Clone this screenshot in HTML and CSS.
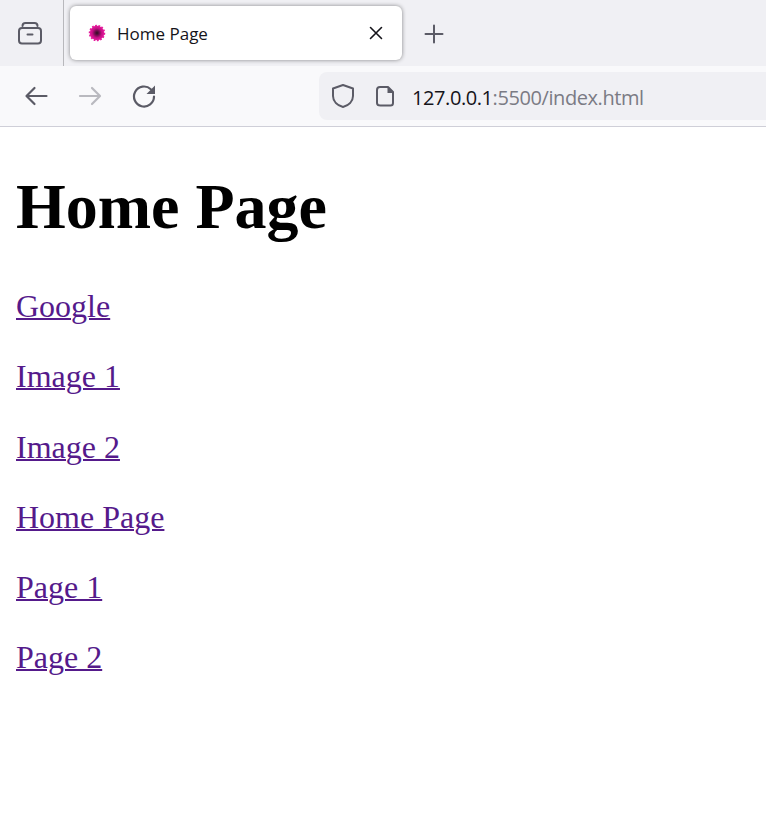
FILE: index.html
```html
<!DOCTYPE html>
<html lang="en">
<head>
<meta charset="utf-8">
<title>Home Page</title>
<link rel="stylesheet" href="styles.css">
</head>
<body>
<header class="browser">
  <div class="tabbar">
    <div class="tabs-side">
      <svg class="icon" width="28" height="28" viewBox="0 0 28 28" fill="none" stroke="#5b5b66" stroke-width="2" stroke-linecap="round" stroke-linejoin="round"><path d="M6.500 7c0-2 1-3 3-3h9c2 0 3 1 3 3"/><rect x="3" y="9" width="22" height="15.500" rx="3"/><path d="M11.500 15.500h5"/></svg>
    </div>
    <div class="tab">
      <svg class="favicon" width="20" height="20" viewBox="0 0 20 20"><defs><radialGradient id="bloom"><stop offset="0" stop-color="#2e0f1e"/><stop offset=".3" stop-color="#6d0d4c"/><stop offset=".65" stop-color="#c40f84"/><stop offset="1" stop-color="#e51a9c"/></radialGradient></defs><circle cx="10" cy="10" r="7" fill="#e51a9c" fill-opacity=".85" stroke="#e51a9c" stroke-width="2.500" stroke-dasharray="1.700 1.400"/><circle cx="10" cy="10" r="7.200" fill="url(#bloom)"/></svg>
      <span class="tab-title">Home Page</span>
      <svg class="tab-close" width="14" height="14" viewBox="0 0 14 14" fill="none" stroke="#15141a" stroke-width="1.600" stroke-linecap="round"><path d="M1.500 1.500l11 11M12.500 1.500l-11 11"/></svg>
    </div>
    <svg class="newtab" width="20" height="20" viewBox="0 0 20 20" fill="none" stroke="#5b5b66" stroke-width="2" stroke-linecap="round"><path d="M10 1.500v17M1.500 10h17"/></svg>
  </div>
  <div class="toolbar">
    <div class="nav">
      <svg width="26" height="26" viewBox="0 0 26 26" fill="none" stroke="#5b5b66" stroke-width="2.200" stroke-linecap="round" stroke-linejoin="round"><path d="M4 13h19.500M11.500 5L3.500 13l8 8"/></svg>
      <svg width="26" height="26" viewBox="0 0 26 26" fill="none" stroke="#b9b9bf" stroke-width="2.200" stroke-linecap="round" stroke-linejoin="round"><path d="M22.500 13H3M15 5l8 8-8 8"/></svg>
      <svg width="26" height="26" viewBox="0 0 26 26" fill="none" stroke="#5b5b66" stroke-width="2.200" stroke-linecap="round" stroke-linejoin="round"><path d="M23 13.500a10 10 0 1 1-3.200-7.300"/><path d="M24 2.500V11h-8.500z" fill="#5b5b66" stroke="none"/></svg>
    </div>
    <div class="urlbar">
      <svg width="24" height="26" viewBox="0 0 24 26" fill="none" stroke="#5b5b66" stroke-width="2" stroke-linejoin="round"><path d="M12 2L22 5.500V13c0 5.500-4.500 9.500-10 11C6.500 22.500 2 18.500 2 13V5.500z"/></svg>
      <svg class="doc" width="20" height="24" viewBox="0 0 20 24" fill="none" stroke="#5b5b66" stroke-width="2" stroke-linejoin="round"><path d="M5 3h8l5 5v11c0 1.500-1 2.500-2.500 2.500h-10C3 21.500 2 20.500 2 19V6c0-1.500 1-3 3-3z"/><path d="M12.500 3v6h6z" fill="#5b5b66" stroke="none"/></svg>
      <span class="url"><span class="host">127.0.0.1</span>:5500/index.html</span>
    </div>
  </div>
</header>
<main class="content">
  <h1 class="title">Home Page</h1>
  <p class="item"><a class="link" href="#">Google</a></p>
  <p class="item"><a class="link" href="#">Image 1</a></p>
  <p class="item"><a class="link" href="#">Image 2</a></p>
  <p class="item"><a class="link" href="#">Home Page</a></p>
  <p class="item"><a class="link" href="#">Page 1</a></p>
  <p class="item"><a class="link" href="#">Page 2</a></p>
</main>
</body>
</html>
```
FILE: styles.css
```css
html, body { margin: 0; padding: 0; background: #fff; overflow: hidden; }
body { width: 766px; height: 827px; }
.browser { font-family: "Open Sans", "Noto Sans", sans-serif; }
.tabbar {
  height: 66px; background: #f0f0f4; display: flex; align-items: center;
}
.tabs-side {
  width: 60px; height: 66px; padding-right: 3px; border-right: 1px solid #b8b8bc;
  display: flex; align-items: center; justify-content: center; flex: none;
}
.tab {
  margin-left: 6px; width: 332px; height: 54px; background: #fff; border-radius: 6px;
  box-shadow: 0 0 4px rgba(0,0,0,.45);
  display: flex; align-items: center; padding: 0 19px 0 17px; box-sizing: border-box; flex: none;
}
.favicon { flex: none; }
.tab-title { margin-left: 10px; font-size: 17px; color: #15141a; flex: 1; white-space: nowrap; }
.newtab { margin: 2px 0 0 22px; flex: none; }
.toolbar {
  height: 60px; background: #f9f9fb; border-bottom: 1px solid #cfcfd8;
  display: flex; align-items: center;
}
.nav { display: flex; align-items: center; gap: 28px; margin-left: 23px; width: 296px; flex: none; }
.urlbar {
  flex: 1; height: 48px; background: #f0f0f4; border-radius: 8px 0 0 8px;
  display: flex; align-items: center; padding-left: 12px; white-space: nowrap;
}
.doc { margin-left: 20px; }
.url { margin: 2px 0 0 17px; font-size: 20px; color: #7b7b84; letter-spacing: -.42px; }
.host { color: #15141a; }
.content { font-family: "Liberation Serif", "Times New Roman", serif; padding: 0 16px; }
.title { font-size: 64px; font-weight: bold; line-height: 74px; margin: 43px 0 0; color: #000; }
.item { font-size: 32px; line-height: 38.25px; margin: 32px 0; }
.title + .item { margin-top: 43px; }
.link { color: #551a8b; text-decoration: underline; text-decoration-thickness: 2px; }
```
